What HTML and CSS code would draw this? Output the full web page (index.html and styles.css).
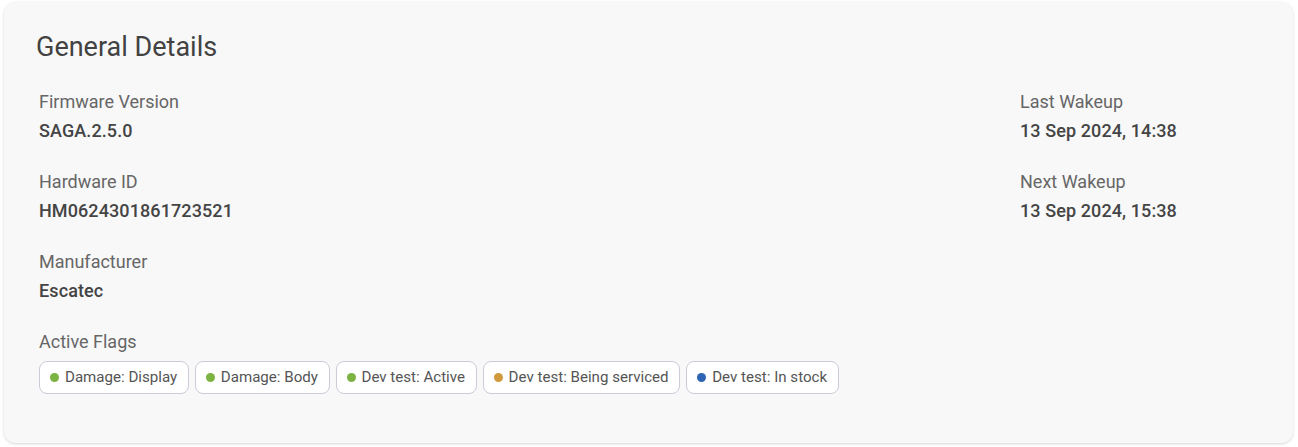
FILE: index.html
```html
<!DOCTYPE html>
<html lang="en">
<head>
<meta charset="utf-8">
<title>General Details</title>
<link rel="stylesheet" href="styles.css">
</head>
<body>
<section class="card">
  <h2 class="title">General Details</h2>
  <div class="grid">
    <div class="col">
      <div class="field">
        <div class="label">Firmware Version</div>
        <div class="value">SAGA.2.5.0</div>
      </div>
      <div class="field">
        <div class="label">Hardware ID</div>
        <div class="value">HM0624301861723521</div>
      </div>
      <div class="field">
        <div class="label">Manufacturer</div>
        <div class="value">Escatec</div>
      </div>
      <div class="field">
        <div class="label">Active Flags</div>
        <div class="chips">
          <span class="chip"><span class="dot green"></span>Damage: Display</span>
          <span class="chip"><span class="dot green"></span>Damage: Body</span>
          <span class="chip"><span class="dot green"></span>Dev test: Active</span>
          <span class="chip"><span class="dot orange"></span>Dev test: Being serviced</span>
          <span class="chip"><span class="dot blue"></span>Dev test: In stock</span>
        </div>
      </div>
    </div>
    <div class="col">
      <div class="field">
        <div class="label">Last Wakeup</div>
        <div class="value">13 Sep 2024, 14:38</div>
      </div>
      <div class="field">
        <div class="label">Next Wakeup</div>
        <div class="value">13 Sep 2024, 15:38</div>
      </div>
    </div>
  </div>
</section>
</body>
</html>
```
FILE: styles.css
```css
html, body {
  margin: 0;
  background: #ffffff;
}
body {
  padding: 2px 5px 4px 4px;
  font-family: Roboto, "Liberation Sans", sans-serif;
}
.card {
  background: #f8f8f8;
  border-radius: 12px;
  box-shadow: 0 1px 3px rgba(0, 0, 0, 0.16);
  padding: 29px 32px 49px 32px;
}
.title {
  margin: 0;
  font-size: 27px;
  line-height: 32px;
  font-weight: 400;
  color: #424242;
}
.grid {
  display: grid;
  grid-template-columns: 1fr 241px;
  margin-top: 27px;
  padding-left: 3px;
}
.col {
  display: flex;
  flex-direction: column;
  gap: 26px;
}
.label {
  font-size: 18px;
  line-height: 24px;
  color: #666666;
}
.value {
  margin-top: 4px;
  font-size: 18px;
  line-height: 26px;
  font-weight: 500;
  letter-spacing: 0.1px;
  color: #444444;
}
.chips {
  margin-top: 7px;
  display: flex;
  flex-wrap: wrap;
  gap: 6px;
}
.chip {
  display: inline-flex;
  align-items: center;
  gap: 6px;
  padding: 6px 10.6px 6px 10px;
  border: 1px solid #cbcbd9;
  border-radius: 8px;
  background: #ffffff;
  font-size: 15.1px;
  line-height: 19px;
  color: #555555;
}
.dot {
  width: 9px;
  height: 9px;
  border-radius: 50%;
  flex: none;
}
.green { background: #7cb342; }
.orange { background: #d09a3c; }
.blue { background: #2e64b4; }
```
